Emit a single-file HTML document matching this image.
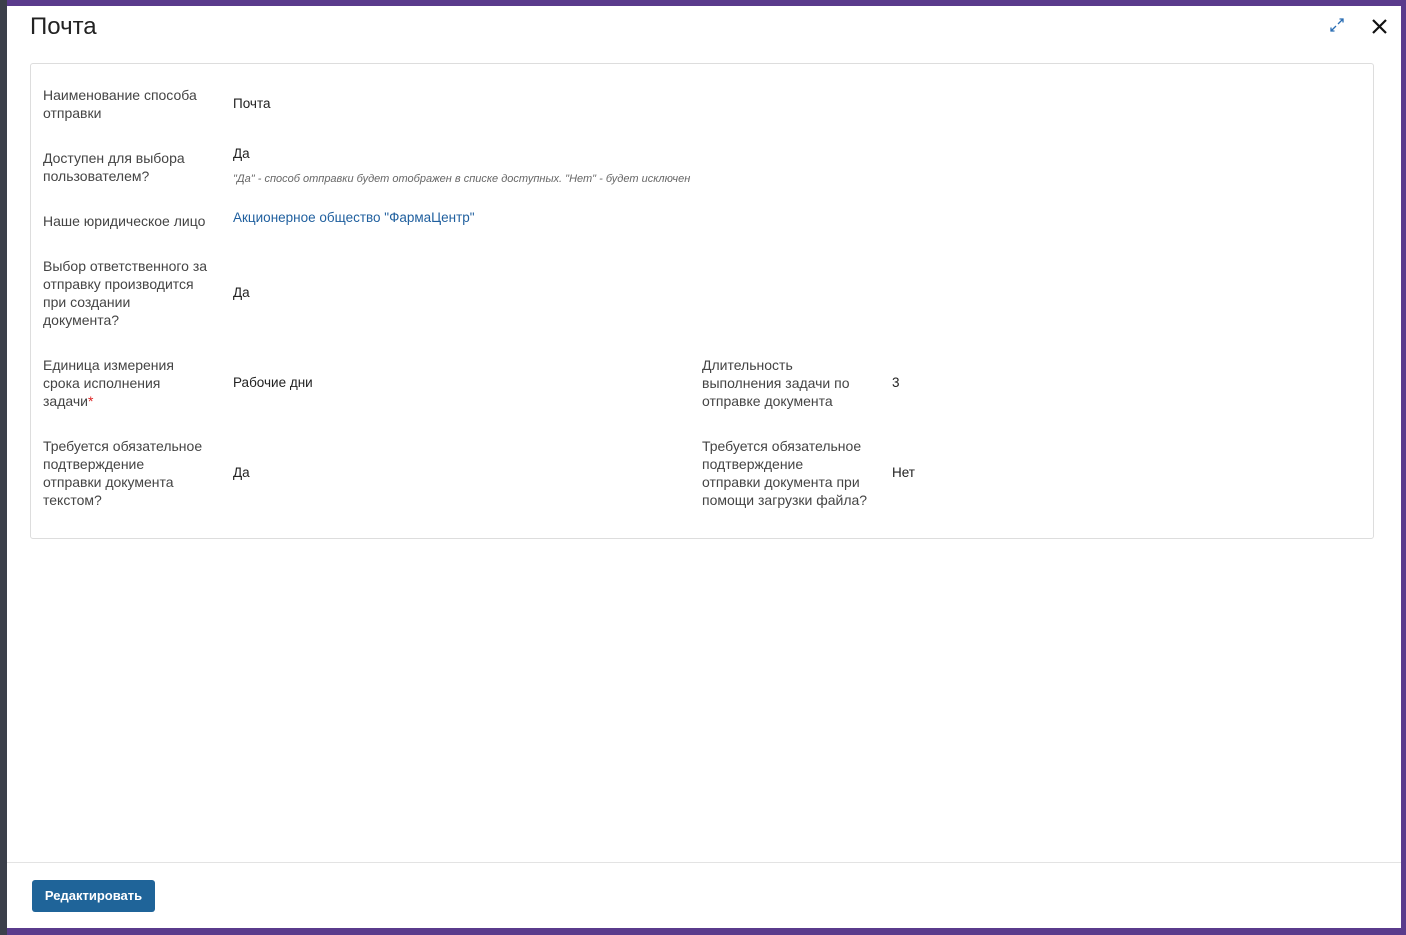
<!DOCTYPE html>
<html><head><meta charset="utf-8"><style>
html,body{margin:0;padding:0;width:1406px;height:935px;overflow:hidden;background:#5a3b8c;font-family:"Liberation Sans","Noto Sans CJK SC",sans-serif;}
.modal{position:absolute;left:7px;top:6px;width:1394px;height:922px;background:#fff;}
.t{position:absolute;white-space:nowrap;}
.lab{color:#444;font-size:14px;line-height:18px;}
.val{color:#222;font-size:13.5px;}
</style></head><body>
<div style="position:absolute;left:0;top:0;width:7px;height:935px;background:#3b3f4a"></div>
<div class="modal">
<div class="t" style="left:23px;top:7px;font-size:24px;color:#222;">Почта</div>
<svg style="position:absolute;left:1323px;top:12px" width="14" height="14" viewBox="0 0 14 14" fill="none" stroke="#2a6db3" stroke-width="1.3"><path d="M8 6L13 1M9.5 1H13V4.5M6 8L1 13M1 9.5V13H4.5"/></svg>
<svg style="position:absolute;left:1364px;top:12px" width="17" height="17" viewBox="0 0 17 17" stroke="#111" stroke-width="2.2"><path d="M2 2L15 15M15 2L2 15"/></svg>
<div style="position:absolute;left:23px;top:57px;width:1342px;height:474px;border:1px solid #ddd;border-radius:3px;"></div>
<div class="t lab" style="left:36px;top:80px">Наименование способа<br>отправки</div>
<div class="t val" style="left:226px;top:90px">Почта</div>
<div class="t lab" style="left:36px;top:143px">Доступен для выбора<br>пользователем?</div>
<div class="t val" style="left:226px;top:140px">Да</div>
<div class="t" style="left:226px;top:167px;font-size:11px;font-style:italic;color:#666">"Да" - способ отправки будет отображен в списке доступных. "Нет" - будет исключен</div>
<div class="t lab" style="left:36px;top:206px">Наше юридическое лицо</div>
<div class="t val" style="left:226px;top:204px;color:#1f5f9e">Акционерное общество "ФармаЦентр"</div>
<div class="t lab" style="left:36px;top:251px">Выбор ответственного за<br>отправку производится<br>при создании<br>документа?</div>
<div class="t val" style="left:226px;top:279px">Да</div>
<div class="t lab" style="left:36px;top:350px">Единица измерения<br>срока исполнения<br>задачи<span style="color:#d22">*</span></div>
<div class="t val" style="left:226px;top:369px">Рабочие дни</div>
<div class="t lab" style="left:695px;top:350px">Длительность<br>выполнения задачи по<br>отправке документа</div>
<div class="t val" style="left:885px;top:369px">3</div>
<div class="t lab" style="left:36px;top:431px">Требуется обязательное<br>подтверждение<br>отправки документа<br>текстом?</div>
<div class="t val" style="left:226px;top:459px">Да</div>
<div class="t lab" style="left:695px;top:431px">Требуется обязательное<br>подтверждение<br>отправки документа при<br>помощи загрузки файла?</div>
<div class="t val" style="left:885px;top:459px">Нет</div>
<div style="position:absolute;left:0;top:856px;width:1394px;height:1px;background:#e3e3e3"></div>
<div style="position:absolute;left:25px;top:874px;width:123px;height:32px;background:#1f6499;border-radius:3px;color:#fff;font-size:13px;font-weight:bold;line-height:32px;text-align:center">Редактировать</div>
</div>
</body></html>
